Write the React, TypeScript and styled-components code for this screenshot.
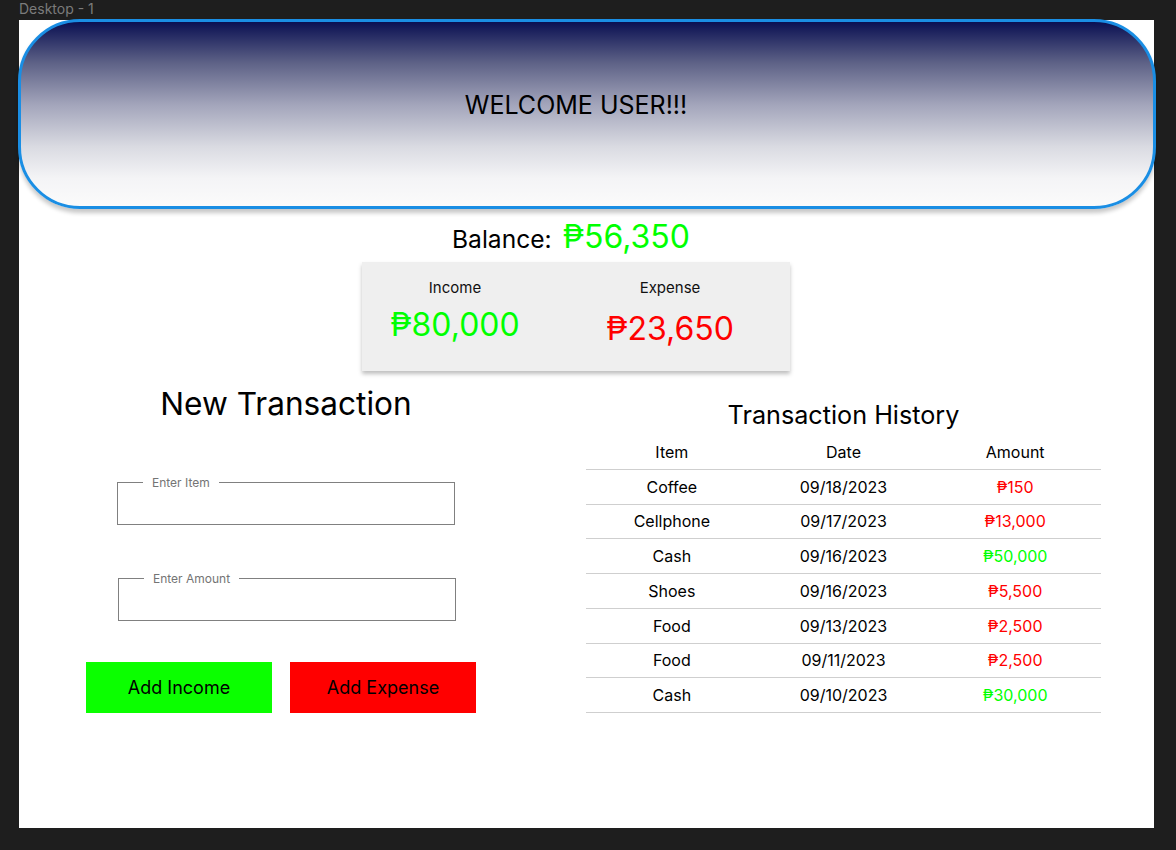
import React from "react";
import styled, { createGlobalStyle } from "styled-components";

const GlobalStyle = createGlobalStyle`
  html, body {
    margin: 0;
    padding: 0;
    background: #1e1e1e;
    font-family: Inter, "DejaVu Sans", sans-serif;
  }
  #root { min-height: 850px; }
`;

const Canvas = styled.div`
  width: 1176px;
  height: 850px;
  background: #1e1e1e;
  overflow: hidden;
`;

const CanvasLabel = styled.div`
  height: 20px;
  padding-left: 19px;
  font-size: 14px;
  line-height: 18px;
  color: #7b7b7b;
  font-family: Inter, sans-serif;
`;

const Frame = styled.div`
  margin-left: 19px;
  width: 1135px;
  height: 808px;
  background: #ffffff;
  display: flex;
  flex-direction: column;
`;

const Header = styled.header`
  box-sizing: border-box;
  margin: -1px -2px 0 -1px;
  height: 190px;
  border: 3px solid #1a8ee4;
  border-radius: 62px;
  background: linear-gradient(
    180deg,
    #0a1052 0%,
    #5d6186 22%,
    #a3a5bb 45%,
    #dadbe2 68%,
    #f4f4f6 85%,
    #fbfbfb 100%
  );
  box-shadow: 0 4px 4px rgba(0, 0, 0, 0.22);
  display: flex;
  align-items: center;
  justify-content: center;
  padding: 0 22px 18px 0;
`;

const Welcome = styled.h1`
  margin: 0;
  font-size: 25px;
  font-weight: 400;
  color: #000;
`;

const BalanceRow = styled.div`
  margin-top: 8px;
  height: 40px;
  padding-left: 433px;
  display: flex;
  align-items: baseline;
  gap: 11px;
`;

const BalanceLabel = styled.span`
  font-size: 24.6px;
  line-height: 40px;
  color: #000;
`;

const Money = styled.span<{ $tone: "gain" | "loss"; $size: number }>`
  font-size: ${(p) => p.$size}px;
  line-height: 40px;
  color: ${(p) => (p.$tone === "gain" ? "#00ff00" : "#ff0000")};
`;

const SummaryCard = styled.section`
  box-sizing: border-box;
  margin: 5px 0 0 343px;
  width: 428px;
  height: 109px;
  background: #efefef;
  box-shadow: 0 3px 4px rgba(0, 0, 0, 0.25);
  display: grid;
  grid-template-columns: 160px 160px;
  column-gap: 55px;
  padding: 17px 0 0 13px;
`;

const SummaryItem = styled.div<{ $drop?: number }>`
  display: flex;
  flex-direction: column;
  align-items: center;
  gap: ${(p) => 8 + (p.$drop ?? 0)}px;
`;

const SummaryLabel = styled.div`
  font-size: 15px;
  line-height: 18px;
  color: #111;
`;

const Main = styled.div`
  margin-top: 13px;
  display: flex;
`;

const LeftColumn = styled.div`
  margin-left: 67px;
  width: 390px;
  display: flex;
  flex-direction: column;
`;

const NewTitle = styled.h2`
  margin: 0;
  padding-left: 10px;
  text-align: center;
  font-size: 31.6px;
  line-height: 40px;
  font-weight: 400;
  color: #000;
`;

const Field = styled.fieldset<{ $indent: number; $top: number }>`
  margin: ${(p) => p.$top}px 0 0 ${(p) => p.$indent}px;
  width: 338px;
  box-sizing: border-box;
  padding: 0 0 0 25px;
  border: 1px solid #808080;
  border-radius: 0;
  min-inline-size: 0;
`;

const FieldLegend = styled.legend`
  padding: 0 9px;
  font-size: 12px;
  line-height: 13px;
  color: #747474;
`;

const FieldBody = styled.div`
  height: 35px;
`;

const ButtonRow = styled.div`
  margin-top: 41px;
  display: flex;
  gap: 18px;
`;

const ActionButton = styled.button<{ $kind: "income" | "expense" }>`
  width: 186px;
  height: 51px;
  border: none;
  border-radius: 0;
  background: ${(p) => (p.$kind === "income" ? "#0bff00" : "#ff0000")};
  font-family: Inter, sans-serif;
  font-size: 18px;
  color: #000;
  cursor: pointer;
`;

const RightColumn = styled.div`
  margin-left: 110px;
  width: 515px;
  padding-top: 15px;
  display: flex;
  flex-direction: column;
`;

const HistoryTitle = styled.h2`
  margin: 0;
  text-align: center;
  font-size: 25.2px;
  line-height: 32px;
  font-weight: 400;
  color: #000;
`;

const Table = styled.div`
  margin-top: 4px;
  display: flex;
  flex-direction: column;
`;

const Row = styled.div`
  box-sizing: border-box;
  height: 34.75px;
  display: grid;
  grid-template-columns: repeat(3, 1fr);
  align-items: center;
  border-bottom: 1px solid #cfcfcf;
`;

const Cell = styled.div<{ $tone?: "gain" | "loss" }>`
  text-align: center;
  font-size: 16px;
  line-height: 20px;
  color: ${(p) => (p.$tone === "gain" ? "#00ff00" : p.$tone === "loss" ? "#ff0000" : "#000")};
`;

type Tx = { item: string; date: string; amount: string; tone: "gain" | "loss" };

const transactions: Tx[] = [
  { item: "Coffee", date: "09/18/2023", amount: "₱150", tone: "loss" },
  { item: "Cellphone", date: "09/17/2023", amount: "₱13,000", tone: "loss" },
  { item: "Cash", date: "09/16/2023", amount: "₱50,000", tone: "gain" },
  { item: "Shoes", date: "09/16/2023", amount: "₱5,500", tone: "loss" },
  { item: "Food", date: "09/13/2023", amount: "₱2,500", tone: "loss" },
  { item: "Food", date: "09/11/2023", amount: "₱2,500", tone: "loss" },
  { item: "Cash", date: "09/10/2023", amount: "₱30,000", tone: "gain" },
];

export default function App() {
  return (
    <>
      <GlobalStyle />
      <Canvas>
        <CanvasLabel>Desktop - 1</CanvasLabel>
        <Frame>
          <Header>
            <Welcome>WELCOME USER!!!</Welcome>
          </Header>

          <BalanceRow>
            <BalanceLabel>Balance:</BalanceLabel>
            <Money $tone="gain" $size={32}>₱56,350</Money>
          </BalanceRow>

          <SummaryCard>
            <SummaryItem>
              <SummaryLabel>Income</SummaryLabel>
              <Money $tone="gain" $size={32}>₱80,000</Money>
            </SummaryItem>
            <SummaryItem $drop={4}>
              <SummaryLabel>Expense</SummaryLabel>
              <Money $tone="loss" $size={32}>₱23,650</Money>
            </SummaryItem>
          </SummaryCard>

          <Main>
            <LeftColumn>
              <NewTitle>New Transaction</NewTitle>
              <Field $indent={31} $top={52}>
                <FieldLegend>Enter Item</FieldLegend>
                <FieldBody />
              </Field>
              <Field $indent={32} $top={47}>
                <FieldLegend>Enter Amount</FieldLegend>
                <FieldBody />
              </Field>
              <ButtonRow>
                <ActionButton $kind="income">Add Income</ActionButton>
                <ActionButton $kind="expense">Add Expense</ActionButton>
              </ButtonRow>
            </LeftColumn>

            <RightColumn>
              <HistoryTitle>Transaction History</HistoryTitle>
              <Table>
                <Row>
                  <Cell>Item</Cell>
                  <Cell>Date</Cell>
                  <Cell>Amount</Cell>
                </Row>
                {transactions.map((t, i) => (
                  <Row key={i}>
                    <Cell>{t.item}</Cell>
                    <Cell>{t.date}</Cell>
                    <Cell $tone={t.tone}>{t.amount}</Cell>
                  </Row>
                ))}
              </Table>
            </RightColumn>
          </Main>
        </Frame>
      </Canvas>
    </>
  );
}
